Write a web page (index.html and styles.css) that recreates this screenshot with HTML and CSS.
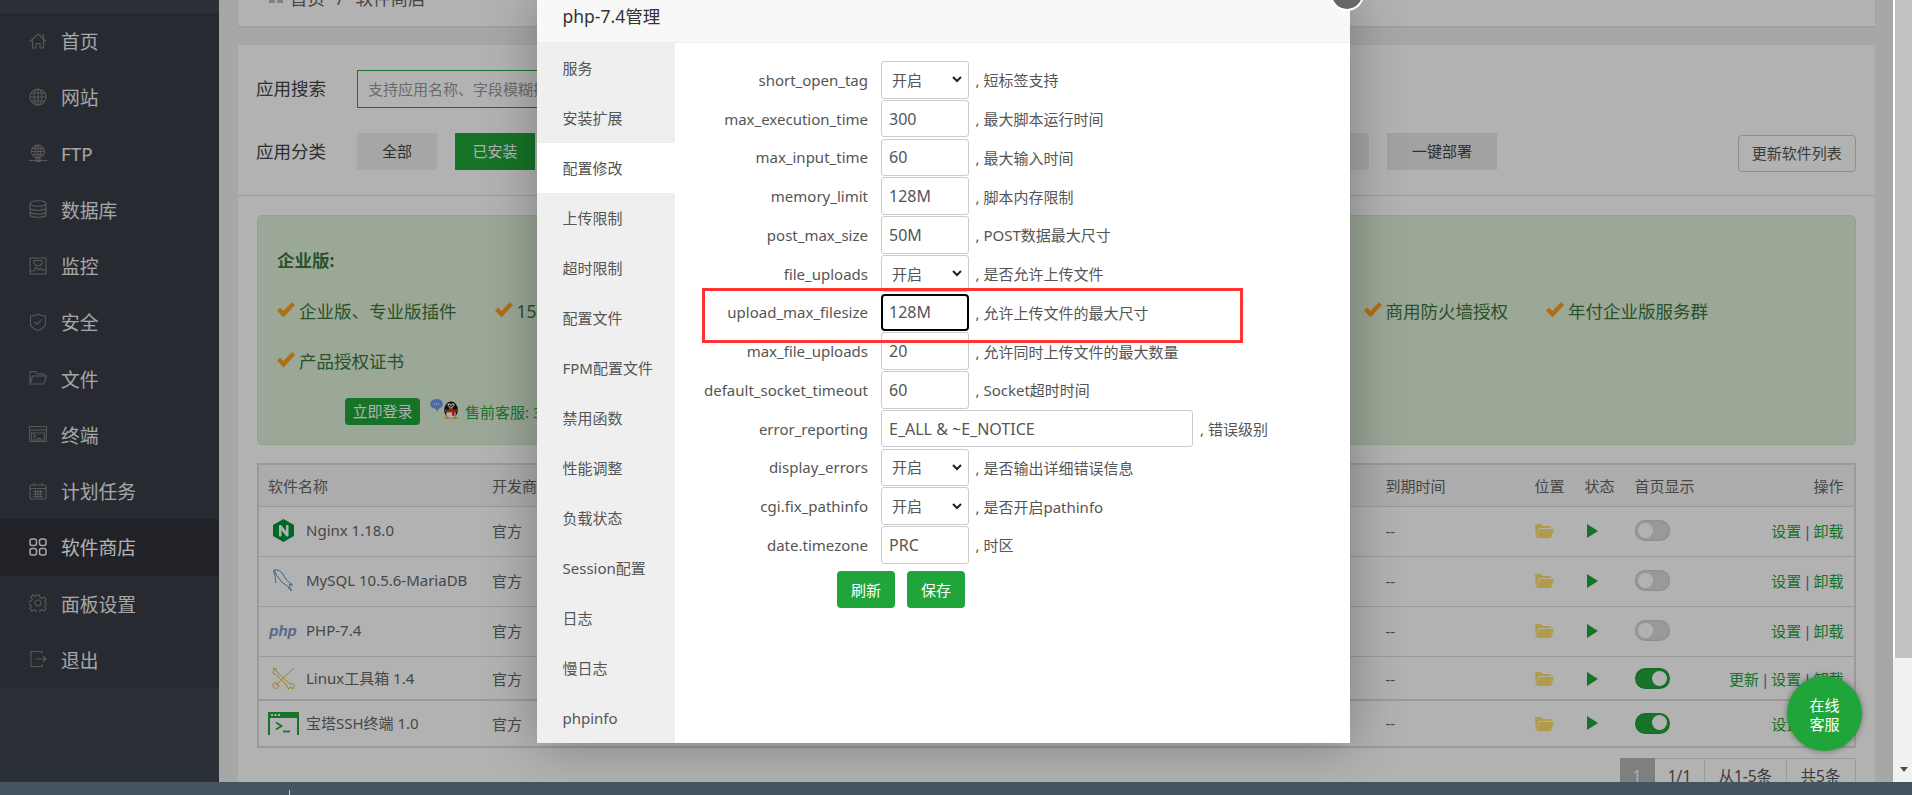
FILE: index.html
```html
<!DOCTYPE html>
<html lang="zh-CN">
<head>
<meta charset="utf-8">
<title>软件商店</title>
<link rel="stylesheet" href="styles.css">
</head>
<body>
<div class="page">
  <div class="workspace">
    <div class="desk">
      <aside class="sidebar">
        <nav class="nav">
          <a class="nav-item"><svg class="nav-icon" viewBox="0 0 18 18"><path d="M1 9.500 9 2l8 7.500M3.500 8v8H7v-4.500h4V16h3.500V8M12.500 3h2v3"/></svg>首页</a>
          <a class="nav-item"><svg class="nav-icon" viewBox="0 0 18 18"><circle cx="9" cy="9" r="8"/><ellipse cx="9" cy="9" rx="4" ry="8"/><path d="M1 9h16M2 5h14M2 13h14M9 1v16"/></svg>网站</a>
          <a class="nav-item"><svg class="nav-icon" viewBox="0 0 18 18"><circle cx="9" cy="7.500" r="6.500"/><ellipse cx="9" cy="7.500" rx="3" ry="6.500"/><path d="M2.500 7.500h13M3.500 4.500h11M3.500 10.500h11M9 1v13M0 16.500h18M7 15h4v2.500H7z"/></svg>FTP</a>
          <a class="nav-item"><svg class="nav-icon" viewBox="0 0 18 18"><ellipse cx="9" cy="3.500" rx="8" ry="2.800"/><path d="M1 3.500v11c0 1.500 3.600 2.800 8 2.800s8-1.300 8-2.800v-11M1 7.500c0 1.500 3.600 2.800 8 2.800s8-1.300 8-2.800M1 11.200c0 1.500 3.600 2.800 8 2.800s8-1.300 8-2.800"/></svg>数据库</a>
          <a class="nav-item"><svg class="nav-icon" viewBox="0 0 18 18"><rect x="1" y="1" width="16" height="16"/><path d="M1 14h4l2-4 2.500 3 2-2 1 2H17M5 3.500h8v3l-2 2H7l-2-2z"/></svg>监控</a>
          <a class="nav-item"><svg class="nav-icon" viewBox="0 0 18 18"><path d="M9 1c2.500 1.500 5 2 7.500 2v7c0 3.500-3 6-7.500 7.500C4.500 16 1.500 13.500 1.500 10V3C4 3 6.500 2.500 9 1zM5.500 9l2.500 2.500 4.500-5"/></svg>安全</a>
          <a class="nav-item"><svg class="nav-icon" viewBox="0 0 18 18"><path d="M1 15V2.500h5.500l1.500 2.500h7v2M1 15l2.500-8H17.500L15 15z"/></svg>文件</a>
          <a class="nav-item"><svg class="nav-icon" viewBox="0 0 18 18"><rect x="0.500" y="1.500" width="17" height="15" rx="1"/><path d="M0.500 5h17M2.500 8h13v7h-13zM4.500 9.500l2 1.800-2 1.800M8 13.500h4"/></svg>终端</a>
          <a class="nav-item"><svg class="nav-icon" viewBox="0 0 18 18"><rect x="1" y="3" width="16" height="14" rx="2"/><path d="M1 6.500h16M5 1v3M13 1v3M4 9.500h10M4 12h10M4 14.500h10M6.500 8v8M9 8v8M11.500 8v8"/></svg>计划任务</a>
          <a class="nav-item nav-active"><svg class="nav-icon" viewBox="0 0 18 18"><rect x="1" y="1" width="6.500" height="6.500" rx="2"/><rect x="10.500" y="1" width="6.500" height="6.500" rx="2"/><rect x="1" y="10.500" width="6.500" height="6.500" rx="2"/><rect x="10.500" y="10.500" width="6.500" height="6.500" rx="2"/></svg>软件商店</a>
          <a class="nav-item"><svg class="nav-icon" viewBox="0 0 18 18"><circle cx="9" cy="9" r="3"/><path d="M7.500 1h3l.5 2.500 1.800.8L15 3l2 2-1.300 2.200.8 1.800L18 9.500v0l-1.500 1.500-.8 1.800L17 15l-2 2-2.200-1.300-1.800.8-.5 2.500h-3L7 16.500l-1.800-.8L3 17l-2-2 1.300-2.200-.8-1.800L0 10.500V7.500l2.500-.5.800-1.800L2 3l2-2 2.200 1.300L7 2.500z"/></svg>面板设置</a>
          <a class="nav-item"><svg class="nav-icon" viewBox="0 0 18 18"><path d="M13 4V1.500H2v15h11V14M7 9h10M14 6l3 3-3 3"/></svg>退出</a>
        </nav>
      </aside>
      <main class="main">
        <div class="crumbs">
          <svg class="crumb-icon" viewBox="0 0 14 14"><rect x="0" y="0" width="6" height="6"/><rect x="8" y="0" width="6" height="6"/><rect x="0" y="8" width="6" height="6"/><rect x="8" y="8" width="6" height="6"/></svg>
          <span>首页</span><span class="crumb-sep">/</span><span>软件商店</span>
        </div>
        <section class="panel">
          <div class="filter-top">
            <div class="filter-row">
              <span class="filter-label">应用搜索</span>
              <input class="search" type="text" placeholder="支持应用名称、字段模糊搜索">
            </div>
            <div class="filter-row">
              <span class="filter-label">应用分类</span>
              <span class="cat">全部</span>
              <span class="cat cat-on">已安装</span>
              <span class="cat cat-mid">运行环境</span>
              <span class="cat cat-mid">系统工具</span>
              <span class="cat cat-mid">宝塔插件</span>
              <span class="cat cat-mid">专业版插件</span>
              <span class="cat cat-mid">企业版插件</span>
              <span class="cat cat-mid">第三方应用</span>
              <span class="cat cat-wide">一键部署</span>
              <span class="refresh-list">更新软件列表</span>
            </div>
          </div>
          <div class="panel-body">
            <div class="ent">
              <div class="ent-title">企业版:</div>
              <div class="ent-row">
                <span class="ent-item"><svg class="check" viewBox="0 0 18 16"><path d="M0 8.500 3 5.500l3.500 3.500L15 0l3 3L6.500 15.500z"/></svg>企业版、专业版插件</span>
                <span class="ent-item"><svg class="check" viewBox="0 0 18 16"><path d="M0 8.500 3 5.500l3.500 3.500L15 0l3 3L6.500 15.500z"/></svg>15天无理由退款</span>
                <span class="ent-item ent-push"><svg class="check" viewBox="0 0 18 16"><path d="M0 8.500 3 5.500l3.500 3.500L15 0l3 3L6.500 15.500z"/></svg>商用防火墙授权</span>
                <span class="ent-item"><svg class="check" viewBox="0 0 18 16"><path d="M0 8.500 3 5.500l3.500 3.500L15 0l3 3L6.500 15.500z"/></svg>年付企业版服务群</span>
              </div>
              <div class="ent-row">
                <span class="ent-item"><svg class="check" viewBox="0 0 18 16"><path d="M0 8.500 3 5.500l3.500 3.500L15 0l3 3L6.500 15.500z"/></svg>产品授权证书</span>
              </div>
              <div class="ent-login">
                <span class="login-btn">立即登录</span>
                <svg class="qq" viewBox="0 0 29 20"><ellipse cx="6.500" cy="5" rx="6.500" ry="5" fill="#6f9af0"/><path d="M5 9l2 3.500 2.500-3.500z" fill="#6f9af0"/><path d="M4 5h1.200M6 5h1.200M8 5h1.200" stroke="#fff" stroke-width="1"/><ellipse cx="21" cy="11" rx="6.800" ry="8.500" fill="#161616"/><ellipse cx="21" cy="15" rx="4.800" ry="4.500" fill="#f6f6f6"/><circle cx="19.200" cy="6" r="1.700" fill="#fff"/><circle cx="22.800" cy="6" r="1.700" fill="#fff"/><circle cx="19.500" cy="6.200" r=".8" fill="#111"/><circle cx="22.500" cy="6.200" r=".8" fill="#111"/><ellipse cx="21" cy="8.800" rx="2.200" ry="1" fill="#f5b50e"/><path d="M15 10.500h12.500v2l-3 .8v3.500h-2.500v-3.500h-7z" fill="#e02a1c"/><ellipse cx="17" cy="19" rx="3.200" ry="1" fill="#f5b50e"/><ellipse cx="25" cy="19" rx="3.200" ry="1" fill="#f5b50e"/></svg>
                <span class="ent-phone">售前客服: 3007255432</span>
              </div>
            </div>
            <table class="soft">
              <colgroup><col class="c-name"><col class="c-dev"><col class="c-desc"><col class="c-exp"><col class="c-pos"><col class="c-state"><col class="c-home"><col class="c-op"></colgroup>
              <thead>
                <tr class="r-head"><th>软件名称</th><th>开发商</th><th>说明</th><th>到期时间</th><th>位置</th><th>状态</th><th>首页显示</th><th class="op">操作</th></tr>
              </thead>
              <tbody>
                <tr class="r-50">
                  <td><div class="name"><span class="logo"><svg class="logo-nginx" viewBox="0 0 21 23"><path d="M10.500 0 21 6v11l-10.500 6L0 17V6z" fill="#009639"/><path d="M6.500 17V6.500h1.500l5.500 7v-7h1.500V17h-1.500l-5.500-7v7z" fill="#fff" stroke="#fff"/></svg></span>Nginx 1.18.0</div></td>
                  <td>官方</td><td></td><td>--</td>
                  <td><svg class="folder" viewBox="0 0 19 15"><path d="M1 15 0 3V1h6l1.500 2H16v2H4zM4.500 6H19l-3 9H1.500z"/></svg></td>
                  <td><svg class="play" viewBox="0 0 11 14"><path d="M0 0l11 7-11 7z"/></svg></td>
                  <td><span class="switch"><span class="knob"></span></span></td>
                  <td class="op"><a>设置</a><i>|</i><a>卸载</a></td>
                </tr>
                <tr class="r-50">
                  <td><div class="name"><span class="logo"><svg class="logo-mysql" viewBox="0 0 21 23"><path d="M1 1c3-.5 6 .5 8 3 2 2.500 3 5 5 7.500 1.500 2 4 3 5.500 4.500l-3-.5.5 3 1.500 3.500-3-3M1 1c-.5 3 1.500 6 1.500 9 0 1-.5 2 .5 4M1 1c2 3 2 5 4 7 1.500 1.500 2 4 5 6 2 1.500 4 2 6 5"/></svg></span>MySQL 10.5.6-MariaDB</div></td>
                  <td>官方</td><td></td><td>--</td>
                  <td><svg class="folder" viewBox="0 0 19 15"><path d="M1 15 0 3V1h6l1.500 2H16v2H4zM4.500 6H19l-3 9H1.500z"/></svg></td>
                  <td><svg class="play" viewBox="0 0 11 14"><path d="M0 0l11 7-11 7z"/></svg></td>
                  <td><span class="switch"><span class="knob"></span></span></td>
                  <td class="op"><a>设置</a><i>|</i><a>卸载</a></td>
                </tr>
                <tr class="r-50">
                  <td><div class="name"><span class="logo"><span class="logo-php">php</span></span>PHP-7.4</div></td>
                  <td>官方</td><td></td><td>--</td>
                  <td><svg class="folder" viewBox="0 0 19 15"><path d="M1 15 0 3V1h6l1.500 2H16v2H4zM4.500 6H19l-3 9H1.500z"/></svg></td>
                  <td><svg class="play" viewBox="0 0 11 14"><path d="M0 0l11 7-11 7z"/></svg></td>
                  <td><span class="switch"><span class="knob"></span></span></td>
                  <td class="op"><a>设置</a><i>|</i><a>卸载</a></td>
                </tr>
                <tr class="r-44">
                  <td><div class="name"><span class="logo"><svg class="logo-tools" viewBox="0 0 23 23"><path d="M22 1 4 18M3 15.500c-1.500.5-2.500 2-2 3.500s2 3 3.500 2.500 2.500-2 2-3.500zM1 1l3 1v2l1.500 1.500L18 17c1.500-1 3.500-.5 4 1s-.5 3.500-2 4l-.5-2-2 .5L17 22c-1.500-.5-2.500-2-2-3.500L3.500 7 1.500 7c-.5-2 0-4 1-4.500z"/></svg></span>Linux工具箱 1.4</div></td>
                  <td>官方</td><td></td><td>--</td>
                  <td><svg class="folder" viewBox="0 0 19 15"><path d="M1 15 0 3V1h6l1.500 2H16v2H4zM4.500 6H19l-3 9H1.500z"/></svg></td>
                  <td><svg class="play" viewBox="0 0 11 14"><path d="M0 0l11 7-11 7z"/></svg></td>
                  <td><span class="switch switch-on"><span class="knob"></span></span></td>
                  <td class="op"><a>更新</a><i>|</i><a>设置</a><i>|</i><a>卸载</a></td>
                </tr>
                <tr class="r-46">
                  <td><div class="name"><span class="logo"><svg class="logo-ssh" viewBox="0 0 31 23"><path d="M0 0h31v23h-2V6H2v17H0z" fill="#20a53a"/><path d="M3 2h2v2H3zM6.500 2h2v2h-2zM10 2h2v2h-2z" fill="#fff"/><path d="M8 10.500l5.500 3.500L8 17.500" fill="none" stroke="#20a53a" stroke-width="1.800"/><path d="M15 19.500h7" stroke="#20a53a" stroke-width="1.800"/></svg></span>宝塔SSH终端 1.0</div></td>
                  <td>官方</td><td></td><td>--</td>
                  <td><svg class="folder" viewBox="0 0 19 15"><path d="M1 15 0 3V1h6l1.500 2H16v2H4zM4.500 6H19l-3 9H1.500z"/></svg></td>
                  <td><svg class="play" viewBox="0 0 11 14"><path d="M0 0l11 7-11 7z"/></svg></td>
                  <td><span class="switch switch-on"><span class="knob"></span></span></td>
                  <td class="op"><a>设置</a><i>|</i><a>卸载</a></td>
                </tr>
              </tbody>
            </table>
            <div class="pager">
              <span class="pg pg-1">1</span><span class="pg pg-2">1/1</span><span class="pg pg-3">从1-5条</span><span class="pg pg-4">共5条</span>
            </div>
          </div>
        </section>
      </main>
      <div class="shade"></div>
      <div class="modal">
        <div class="modal-title">php-7.4管理</div>
        <div class="modal-body">
          <ul class="tabs">
            <li>服务</li><li>安装扩展</li><li class="tab-on">配置修改</li><li>上传限制</li><li>超时限制</li><li>配置文件</li><li>FPM配置文件</li><li>禁用函数</li><li>性能调整</li><li>负载状态</li><li>Session配置</li><li>日志</li><li>慢日志</li><li>phpinfo</li>
          </ul>
          <div class="form">
            <div class="f-row"><label>short_open_tag</label><select class="f-select"><option>开启</option><option>关闭</option></select><span class="f-note">, 短标签支持</span></div>
            <div class="f-row"><label>max_execution_time</label><input class="f-input" type="text" value="300"><span class="f-note">, 最大脚本运行时间</span></div>
            <div class="f-row"><label>max_input_time</label><input class="f-input" type="text" value="60"><span class="f-note">, 最大输入时间</span></div>
            <div class="f-row"><label>memory_limit</label><input class="f-input" type="text" value="128M"><span class="f-note">, 脚本内存限制</span></div>
            <div class="f-row"><label>post_max_size</label><input class="f-input" type="text" value="50M"><span class="f-note">, POST数据最大尺寸</span></div>
            <div class="f-row"><label>file_uploads</label><select class="f-select"><option>开启</option><option>关闭</option></select><span class="f-note">, 是否允许上传文件</span></div>
            <div class="f-row"><label>upload_max_filesize</label><input class="f-input f-focus" type="text" value="128M"><span class="f-note">, 允许上传文件的最大尺寸</span></div>
            <div class="f-row"><label>max_file_uploads</label><input class="f-input" type="text" value="20"><span class="f-note">, 允许同时上传文件的最大数量</span></div>
            <div class="f-row"><label>default_socket_timeout</label><input class="f-input" type="text" value="60"><span class="f-note">, Socket超时时间</span></div>
            <div class="f-row"><label>error_reporting</label><input class="f-input f-long" type="text" value="E_ALL &amp; ~E_NOTICE"><span class="f-note">, 错误级别</span></div>
            <div class="f-row"><label>display_errors</label><select class="f-select"><option>开启</option><option>关闭</option></select><span class="f-note">, 是否输出详细错误信息</span></div>
            <div class="f-row"><label>cgi.fix_pathinfo</label><select class="f-select"><option>开启</option><option>关闭</option></select><span class="f-note">, 是否开启pathinfo</span></div>
            <div class="f-row"><label>date.timezone</label><input class="f-input" type="text" value="PRC"><span class="f-note">, 时区</span></div>
            <div class="f-actions"><button class="f-btn" type="button">刷新</button><button class="f-btn" type="button">保存</button></div>
          </div>
          <div class="redbox"></div>
        </div>
        <span class="modal-close"></span>
      </div>
      <div class="chat"><span>在线</span><span>客服</span></div>
    </div>
    <div class="scrollbar">
      <div class="thumb"></div>
      <div class="scroll-arrow"></div>
    </div>
  </div>
  <footer class="taskbar"><span class="tick"></span></footer>
</div>
</body>
</html>
```

FILE: styles.css
```css
* { box-sizing: border-box; }
html, body { margin: 0; padding: 0; height: 100%; overflow: hidden; }
body { font-family: "Noto Sans", "Noto Sans CJK SC", sans-serif; font-size: 15px; color: #666; background: #f0f0f0; }
.page { width: 1912px; height: 795px; display: flex; flex-direction: column; overflow: hidden; }
.workspace { flex: 0 0 782px; height: 782px; display: flex; overflow: hidden; }
.desk { position: relative; flex: 0 0 1893px; width: 1893px; height: 782px; display: flex; overflow: hidden; background: #f0f0f0; }

/* sidebar */
.sidebar { flex: 0 0 219px; width: 219px; background: #3f4550; padding-top: 13px; }
.nav { background: #383d47; }
.nav-item { height: 56.250px; padding-bottom: 1px; display: flex; align-items: center; padding-left: 29px; font-size: 18.750px; color: #eee; }
.nav-icon { width: 18px; height: 18px; margin-right: 14px; fill: none; stroke: #7f7f7f; stroke-width: 1.100; flex: none; }
.nav-active { background: #2e3238; color: #fff; }
.nav-active .nav-icon { stroke: #f0f0f0; stroke-width: 1.500; }

/* main */
.main { flex: 1; min-width: 0; padding: 0 18.500px 0 19px; overflow: hidden; }
.crumbs { height: 26px; background: #fff; display: flex; align-items: flex-start; padding-left: 31px; font-size: 17.500px; line-height: 24px; box-shadow: 0 1px 2px rgba(0,0,0,.08); overflow: hidden; }
.crumbs span { margin-top: -14px; }
.crumb-icon { width: 14px; height: 14px; margin: -11px 7px 0 0; fill: #bbb; }
.crumb-sep { margin: -14px 12px 0; }
.panel { margin-top: 19px; background: #fff; height: 800px; }
.filter-top { padding: 25px 19px 25px 18px; border-bottom: 1px solid #ddd; height: 151px; }
.filter-row { display: flex; align-items: flex-start; margin-bottom: 25px; }
.filter-label { flex: 0 0 101px; font-size: 17.500px; line-height: 37px; color: #444; }
.search { width: 500px; height: 38px; border: 1px solid #20a53a; padding: 0 10px; font: 15px "Noto Sans", "Noto Sans CJK SC", sans-serif; outline: none; }
.search::placeholder { color: #999; }
.cat { flex: none; height: 37px; width: 80px; line-height: 37px; text-align: center; background: #eee; color: #444; margin-right: 18px; font-size: 15px; }
.cat-on { background: #20a53a; color: #fff; }
.cat-mid { width: 121px; }
.cat-wide { width: 110px; margin-right: 0; background: #e8e8e8; }
.refresh-list { margin-left: auto; margin-top: 2px; width: 117.500px; height: 37px; line-height: 35px; text-align: center; border: 1px solid #ccc; border-radius: 4px; color: #555; font-size: 15px; }
.filter-row:last-child { margin-bottom: 0; }
.panel-body { padding: 19px 19px 0; }

/* enterprise */
.ent { height: 230px; background: #dff0d8; border: 1px solid #d6e9c6; border-radius: 5px; padding: 20px 19px 0; color: #3c763d; }
.ent-title { font-size: 17.500px; font-weight: 700; line-height: 49px; }
.ent-row { display: flex; height: 50px; align-items: center; font-size: 17.500px; }
.ent-item { display: flex; align-items: center; margin-right: 38px; white-space: nowrap; }
.ent-push { margin-left: 684px; }
.check { width: 18px; height: 16px; margin-right: 4px; fill: #ff9f1a; flex: none; }
.ent-login { display: flex; align-items: center; margin-top: 13px; height: 27px; padding-left: 68px; }
.login-btn { width: 75px; height: 27px; line-height: 26px; text-align: center; background: #20a53a; color: #fff; border-radius: 4px; font-size: 15px; }
.qq { width: 29px; height: 20px; margin: -6px 6px 0 10px; }
.ent-phone { font-size: 15px; color: #20a53a; white-space: nowrap; }

/* table */
.soft { width: 100%; table-layout: fixed; border-collapse: separate; border-spacing: 0; margin-top: 18px; border: 2px solid #ddd; font-size: 15px; }
.c-name { width: 223px; }
.c-dev { width: 120px; }
.c-exp { width: 149px; }
.c-pos { width: 50px; }
.c-state { width: 50px; }
.c-home { width: 89px; }
.c-op { width: 140px; }
.soft th { font-weight: 400; text-align: left; padding: 0 10px; background: #f6f6f6; border-bottom: 1px solid #ddd; white-space: nowrap; }
.soft td { padding: 0 10px; border-bottom: 1px solid #ddd; white-space: nowrap; }
.soft th:first-child, .soft td:first-child { padding-left: 9px; }
.soft .op { text-align: right; }
.r-head { height: 42px; }
.r-50 { height: 50px; }
.soft .r-50 td { padding-bottom: 2px; }
.r-44 { height: 43.500px; }
.soft .r-44 td { padding-top: 2px; border-bottom-width: 2px; }
.r-46 { height: 45px; }
.r-46 td { border-bottom: 0; }
.name { display: flex; align-items: center; padding-bottom: 2px; }
.logo { flex: 0 0 38px; width: 38px; height: 24px; margin-top: 2px; display: flex; align-items: center; justify-content: center; }
.logo-nginx { width: 21px; height: 23px; margin-left: -8px; }
.logo-mysql { width: 21px; height: 23px; margin-left: -8px; fill: none; stroke: #5b87a8; stroke-width: 1; }
.logo-php { margin-left: -8px; font: italic 700 15px "Liberation Sans", sans-serif; color: #7f94c0; }
.logo-tools { width: 23px; height: 23px; margin-left: -8px; fill: none; stroke: #e8b62c; stroke-width: 1; }
.logo-ssh { width: 31px; height: 23px; margin-left: -8px; }
.folder { display: block; width: 19px; height: 15px; fill: #fedf6c; }
.play { display: block; margin-left: 2px; width: 11px; height: 14px; fill: #20a53a; }
.switch { display: block; position: relative; width: 35px; height: 21px; border-radius: 11px; background: #dcdcdc; box-shadow: inset 0 0 2px rgba(0,0,0,.25); }
.knob { position: absolute; left: 3px; top: 2.500px; width: 15px; height: 15px; border-radius: 50%; background: #fff; }
.switch-on { background: #20a53a; }
.switch-on .knob { left: 17px; }
.op a { color: #20a53a; }
.op i { font-style: normal; color: #337ab7; margin: 0 2px; }

/* pager */
.pager { display: flex; justify-content: flex-end; margin-top: 10px; }
.pg { height: 37px; line-height: 35px; text-align: center; border: 1px solid #ddd; border-left: 0; font-size: 15.500px; color: #555; }
.pg-1 { width: 35px; background: #b7b7b7; color: #fff; border-color: #b7b7b7; }
.pg-2 { width: 50px; }
.pg-3 { width: 81.500px; }
.pg-4 { width: 69px; }

/* overlay */
.shade { position: absolute; inset: 0; background: rgba(0,0,0,.3); }
.modal { position: absolute; left: 537px; top: 0; width: 813px; height: 743px; background: #fff; box-shadow: 1px 1px 50px rgba(0,0,0,.3); }
.modal-title { height: 43px; background: #f8f8f8; border-bottom: 1px solid #eee; padding-left: 25.500px; font-size: 17.500px; line-height: 32px; color: #333; }
.modal-body { position: relative; display: flex; height: 700px; }
.modal-close { position: absolute; right: -14px; top: -23px; width: 34px; height: 34px; border-radius: 50%; background: #666; border: 2.500px solid #fff; }
.tabs { flex: 0 0 138px; width: 138px; margin: 0; padding: 0; list-style: none; background: #efefef; }
.tabs li { height: 50px; line-height: 50px; padding-left: 25.500px; font-size: 15px; color: #555; }
.tabs .tab-on { background: #fff; }
.form { flex: 1; padding-top: 18px; }
.f-row { display: flex; align-items: center; height: 37.500px; margin-bottom: 1.250px; font-size: 15px; color: #555; }
.f-row label { flex: 0 0 193px; text-align: right; margin-right: 13px; }
.f-select, .f-input { flex: none; width: 87.500px; height: 37.500px; border: 1px solid #ccc; border-radius: 3px; background: #fff; color: #555; font: 15px "Noto Sans", "Noto Sans CJK SC", sans-serif; }
.f-input { padding: 0 7px; outline: none; font-size: 16px; }
.f-select { padding: 0 10px; appearance: none; background-image: url("data:image/svg+xml,%3Csvg xmlns='http://www.w3.org/2000/svg' width='10' height='7'%3E%3Cpath d='M1 1l4 4 4-4' fill='none' stroke='%23222' stroke-width='2'/%3E%3C/svg%3E"); background-repeat: no-repeat; background-position: right 6px center; }
.f-long { width: 312px; }
.f-focus { border: 2px solid #000; border-radius: 4px; padding: 0 6px; }
.f-note { margin-left: 7px; white-space: nowrap; }
.f-actions { display: flex; gap: 12px; margin: 7px 0 0 162px; }
.f-btn { width: 58px; height: 37px; padding: 0; border: 0; border-radius: 4px; background: #20a53a; color: #fff; font: 15px "Noto Sans", "Noto Sans CJK SC", sans-serif; }
.redbox { position: absolute; left: 165px; top: 245px; width: 541px; height: 55px; border: 3px solid #ff3333; pointer-events: none; }
.chat { position: absolute; left: 1787px; top: 676px; width: 75px; height: 75px; padding-top: 2px; border-radius: 50%; background: #20a53a; color: #fff; font-size: 15px; line-height: 19px; display: flex; flex-direction: column; align-items: center; justify-content: center; box-shadow: 0 0 6px rgba(0,0,0,.4); }

/* browser chrome */
.scrollbar { position: relative; flex: 1; background: #f1f1f1; padding-left: 2px; }
.thumb { height: 658px; background: #c1c1c1; }
.scrollbar::before { content: ""; position: absolute; left: 0; top: 0; width: 2px; height: 658px; background: #fff; }
.scroll-arrow { position: absolute; left: 7px; top: 767px; width: 0; height: 0; border-left: 4.500px solid transparent; border-right: 4.500px solid transparent; border-top: 5px solid #505050; }
.taskbar { flex: 1; position: relative; background: #44555f; }
.tick { position: absolute; left: 289px; top: 8px; width: 1px; height: 5px; background: #c8c8c8; }
```
